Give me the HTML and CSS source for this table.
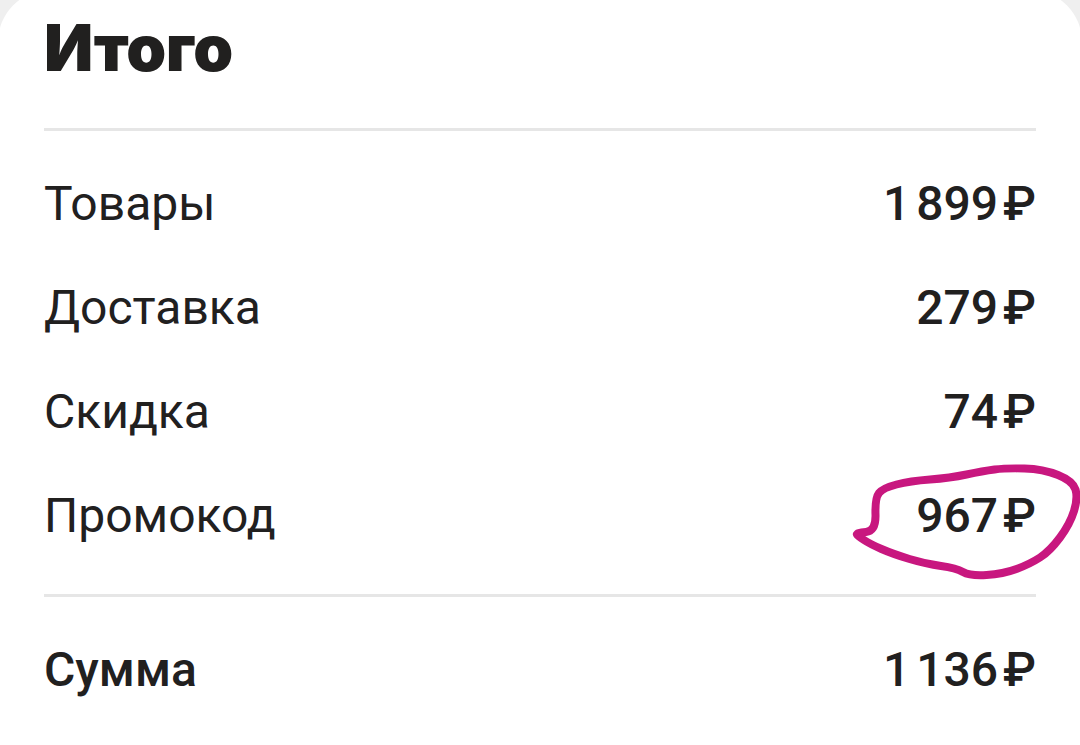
FILE: index.html
```html
<!DOCTYPE html>
<html lang="ru">
<head>
<meta charset="utf-8">
<link rel="stylesheet" href="styles.css">
</head>
<body>
<div class="card">
  <h1 class="title">Итого</h1>
  <div class="divider"></div>
  <div class="rows">
    <div class="row"><span class="label">Товары</span><span class="value">1&#8239;899&#8202;₽</span></div>
    <div class="row"><span class="label">Доставка</span><span class="value">279&#8202;₽</span></div>
    <div class="row"><span class="label">Скидка</span><span class="value">74&#8202;₽</span></div>
    <div class="row"><span class="label">Промокод</span><span class="value">967&#8202;₽
      <svg class="scribble" viewBox="0 0 240 130" width="240" height="130" aria-hidden="true">
        <path d="M18 76 Q28 75 27.5 58.5 Q27 42 31 37 Q35 32 48.5 28.5 Q62 25 82 23.5 Q102 22 118.5 18.5 Q135 15 146.5 13.5 Q158 12 176.5 12.5 Q195 13 210 19 Q225 25 227.5 33.5 Q230 42 226 55 Q222 68 212 81.5 Q202 95 192 101.5 Q182 108 168.5 113 Q155 118 138.5 119 Q122 120 115 116 Q108 112 93 110 Q78 108 61.5 103 Q45 98 33.5 93 Q22 88 16 84 Q10 80 9 78.5 Q8 77 18 76 Z" fill="none" stroke="#c8177f" stroke-width="8" stroke-linecap="round" stroke-linejoin="round"/>
      </svg>
    </span></div>
  </div>
  <div class="divider second"></div>
  <div class="row total"><span class="label">Сумма</span><span class="value">1&#8239;136&#8202;₽</span></div>
</div>
</body>
</html>
```
FILE: styles.css
```css
html, body {
  margin: 0;
  padding: 0;
  background: #efefef;
  height: 100%;
  overflow: hidden;
}
body {
  font-family: Roboto, "Noto Sans", sans-serif;
  color: #21201f;
}
.card {
  background: #fff;
  margin: -10px -2px 0 -2px;
  border-radius: 52px 52px 0 0;
  padding: 12px 46px 0 46px;
  height: 800px;
  box-sizing: border-box;
}
.title {
  margin: 0;
  font-family: Inter, Roboto, sans-serif;
  font-weight: 900;
  font-size: 64px;
  line-height: 92px;
  letter-spacing: -0.5px;
}
.divider {
  height: 3px;
  background: #e6e6e6;
  margin-top: 34px;
}
.rows {
  padding-top: 21px;
}
.row {
  display: flex;
  justify-content: space-between;
  align-items: center;
  height: 104px;
  line-height: 104px;
  font-size: 48px;
}
.label {
  font-weight: 400;
}
.value {
  font-weight: 500;
  position: relative;
}
.divider.second {
  margin-top: 26px;
}
.total {
  margin-top: 21px;
}
.total .label {
  font-weight: 500;
}
.scribble {
  position: absolute;
  right: -52px;
  top: -8px;
  pointer-events: none;
}
```
